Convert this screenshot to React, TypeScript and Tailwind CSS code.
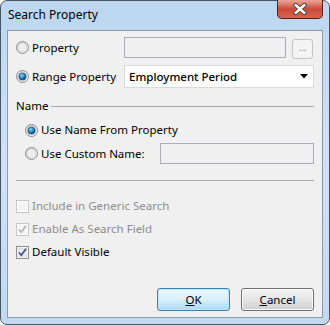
import React from 'react';

const font = { fontFamily: '"Segoe UI", "Noto Sans", "Open Sans", sans-serif' };

const Radio: React.FC<{ checked?: boolean }> = ({ checked }) => (
  <svg width="13" height="13" viewBox="0 0 13 13" className="shrink-0">
    <defs>
      <linearGradient id="rb" x1="0" y1="0" x2="1" y2="1">
        <stop offset="0" stopColor="#d6d6d6" />
        <stop offset="1" stopColor="#ffffff" />
      </linearGradient>
      <radialGradient id="rd" cx="0.4" cy="0.35" r="0.7">
        <stop offset="0" stopColor="#8fd3f7" />
        <stop offset="0.5" stopColor="#2a8ac8" />
        <stop offset="1" stopColor="#0d3c66" />
      </radialGradient>
    </defs>
    <circle cx="6.5" cy="6.5" r="6" fill="url(#rb)" stroke="#8b8b8b" strokeWidth="1" />
    <circle cx="6.5" cy="6.5" r="4.5" fill="#eeeeee" stroke="#c9c9c9" strokeWidth="0.8" />
    {checked && <circle cx="6.5" cy="6.5" r="3.6" fill="url(#rd)" stroke="#0f3f6a" strokeWidth="0.6" />}
  </svg>
);

const Check: React.FC<{ checked?: boolean; disabled?: boolean }> = ({ checked, disabled }) => (
  <svg width="13" height="13" viewBox="0 0 13 13" className="shrink-0">
    <rect x="0.5" y="0.5" width="12" height="12" fill="#ffffff" stroke={disabled ? '#c6c6c6' : '#8e8f8f'} />
    {!disabled && <rect x="2" y="2" width="9" height="9" fill="#e7e7e7" stroke="#d4d4d4" strokeWidth="0.5" />}
    {disabled && <rect x="2" y="2" width="9" height="9" fill="#f4f4f4" />}
    {checked && (
      <path
        d="M3 6.5 L5.3 9.2 L10 2.8"
        fill="none"
        stroke={disabled ? '#b4b4b4' : '#384e8b'}
        strokeWidth="1.6"
      />
    )}
  </svg>
);

export default function App() {
  return (
    <div className="w-[330px] h-[325px] bg-white" style={font}>
      <div className="w-[330px] h-[325px] rounded-[7px] border border-[#4a5563] bg-gradient-to-b from-[#bcd6f1] via-[#cfe2f6] to-[#c2d9f1] flex flex-col px-[6px] pb-[6px]">
        {/* title bar */}
        <div className="h-[29px] flex justify-between items-start shrink-0">
          <div className="pl-[1px] pt-[6px] text-[12px] leading-[16px] text-black">Search Property</div>
          <div className="w-[46px] h-[19px] -mt-[1px] rounded-b-[5px] border border-[#5a1d13] border-t-0 bg-gradient-to-b from-[#e9a798] via-[#c8493a] to-[#d9634c] flex items-center justify-center">
            <svg width="16" height="12" viewBox="0 0 16 12">
              <path d="M3.5 2 L12.5 10 M12.5 2 L3.5 10" stroke="#3a3a3a" strokeWidth="4.2" strokeLinecap="round" />
              <path d="M3.5 2 L12.5 10 M12.5 2 L3.5 10" stroke="#ffffff" strokeWidth="2.4" strokeLinecap="round" />
            </svg>
          </div>
        </div>

        {/* client area */}
        <div className="flex-1 border border-[#8b9bab] bg-[#f0f0f0] flex flex-col px-[8px] text-[11.5px] leading-[16px] text-black">
          <div className="mt-[6px] h-[21px] flex items-center">
            <Radio />
            <span className="ml-[3px] w-[92px]">Property</span>
            <div className="w-[162px] h-[21px] border border-[#abadb3] bg-[#f0f0f0]" />
            <div className="ml-[6px] w-[21px] h-[20px] mt-[2px] rounded-[3px] border border-[#c4c4c4] bg-[#f4f4f4] flex items-center justify-center text-[10px] text-[#9a8ca8] leading-none pb-[3px]">
              ...
            </div>
          </div>

          <div className="mt-[7px] h-[23px] flex items-center">
            <Radio checked />
            <span className="ml-[3px] w-[92px]">Range Property</span>
            <div className="flex-1 h-[23px] border border-[#d9d9d9] bg-white flex items-center justify-between pl-[4px] pr-[5px]">
              <span className="font-medium">Employment Period</span>
              <svg width="8" height="5" viewBox="0 0 8 5">
                <path d="M0 0 H8 L4 4.5 Z" fill="#000000" />
              </svg>
            </div>
          </div>

          <div className="mt-[10px] flex items-center">
            <span>Name</span>
            <div className="flex-1 ml-[3px] h-px bg-[#a9a9a9]" />
          </div>

          <div className="mt-[8px] flex items-center pl-[9px] h-[16px]">
            <Radio checked />
            <span className="ml-[3px]">Use Name From Property</span>
          </div>

          <div className="mt-[5px] flex items-center pl-[9px] h-[21px]">
            <Radio />
            <span className="ml-[3px] w-[119px]">Use Custom Name:</span>
            <div className="w-[154px] h-[21px] border border-[#abadb3] bg-[#f0f0f0]" />
          </div>

          <div className="mt-[16px] h-px bg-[#a9a9a9]" />

          <div className="mt-[17px] flex items-center h-[16px] text-[#8d8d8d]">
            <Check disabled />
            <span className="ml-[3px]">Include in Generic Search</span>
          </div>
          <div className="mt-[7px] flex items-center h-[16px] text-[#8d8d8d]">
            <Check checked disabled />
            <span className="ml-[3px]">Enable As Search Field</span>
          </div>
          <div className="mt-[7px] flex items-center h-[16px]">
            <Check checked />
            <span className="ml-[3px]">Default Visible</span>
          </div>

          <div className="mt-auto mb-[6px] flex justify-end gap-[11px]">
            <div className="w-[73px] h-[23px] rounded-[3px] border border-[#3c7fb1] bg-gradient-to-b from-[#eaf6fd] via-[#d9f0fc] to-[#a7d9f5] shadow-[inset_0_0_0_1px_#bfe6fb] flex items-center justify-center">
              <span><span className="underline">O</span>K</span>
            </div>
            <div className="w-[73px] h-[23px] rounded-[3px] border border-[#707070] bg-gradient-to-b from-[#f2f2f2] via-[#e6e6e6] to-[#cfcfcf] shadow-[inset_0_0_0_1px_#fbfbfb] flex items-center justify-center">
              <span><span className="underline">C</span>ancel</span>
            </div>
          </div>
        </div>
      </div>
    </div>
  );
}
